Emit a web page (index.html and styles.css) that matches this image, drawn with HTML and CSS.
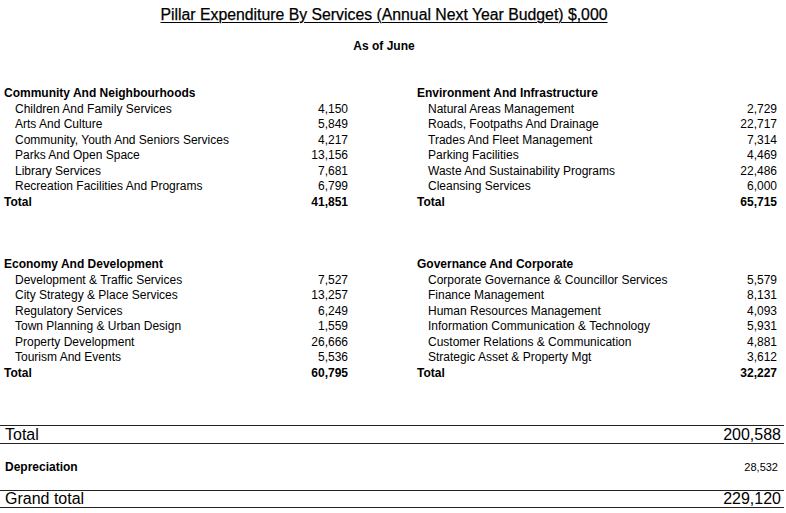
FILE: index.html
```html
<!DOCTYPE html>
<html>
<head>
<meta charset="utf-8">
<link rel="stylesheet" href="styles.css">
</head>
<body>
<div class="report">
  <h1 class="title">Pillar Expenditure By Services (Annual Next Year Budget) $,000</h1>
  <div class="subtitle">As of June</div>

  <div class="grid">
    <section class="group">
      <div class="row head">Community And Neighbourhoods</div>
      <div class="row item"><span>Children And Family Services</span><span>4,150</span></div>
      <div class="row item"><span>Arts And Culture</span><span>5,849</span></div>
      <div class="row item"><span>Community, Youth And Seniors Services</span><span>4,217</span></div>
      <div class="row item"><span>Parks And Open Space</span><span>13,156</span></div>
      <div class="row item"><span>Library Services</span><span>7,681</span></div>
      <div class="row item"><span>Recreation Facilities And Programs</span><span>6,799</span></div>
      <div class="row total"><span>Total</span><span>41,851</span></div>
    </section>
    <section class="group">
      <div class="row head">Environment And Infrastructure</div>
      <div class="row item"><span>Natural Areas Management</span><span>2,729</span></div>
      <div class="row item"><span>Roads, Footpaths And Drainage</span><span>22,717</span></div>
      <div class="row item"><span>Trades And Fleet Management</span><span>7,314</span></div>
      <div class="row item"><span>Parking Facilities</span><span>4,469</span></div>
      <div class="row item"><span>Waste And Sustainability Programs</span><span>22,486</span></div>
      <div class="row item"><span>Cleansing Services</span><span>6,000</span></div>
      <div class="row total"><span>Total</span><span>65,715</span></div>
    </section>
    <section class="group">
      <div class="row head">Economy And Development</div>
      <div class="row item"><span>Development &amp; Traffic Services</span><span>7,527</span></div>
      <div class="row item"><span>City Strategy &amp; Place Services</span><span>13,257</span></div>
      <div class="row item"><span>Regulatory Services</span><span>6,249</span></div>
      <div class="row item"><span>Town Planning &amp; Urban Design</span><span>1,559</span></div>
      <div class="row item"><span>Property Development</span><span>26,666</span></div>
      <div class="row item"><span>Tourism And Events</span><span>5,536</span></div>
      <div class="row total"><span>Total</span><span>60,795</span></div>
    </section>
    <section class="group">
      <div class="row head">Governance And Corporate</div>
      <div class="row item"><span>Corporate Governance &amp; Councillor Services</span><span>5,579</span></div>
      <div class="row item"><span>Finance Management</span><span>8,131</span></div>
      <div class="row item"><span>Human Resources Management</span><span>4,093</span></div>
      <div class="row item"><span>Information Communication &amp; Technology</span><span>5,931</span></div>
      <div class="row item"><span>Customer Relations &amp; Communication</span><span>4,881</span></div>
      <div class="row item"><span>Strategic Asset &amp; Property Mgt</span><span>3,612</span></div>
      <div class="row total"><span>Total</span><span>32,227</span></div>
    </section>
  </div>

  <div class="summary">
    <div class="sum big"><span>Total</span><span>200,588</span></div>
    <div class="sum dep"><span class="dep-label">Depreciation</span><span class="dep-val">28,532</span></div>
    <div class="sum big grand"><span>Grand total</span><span>229,120</span></div>
  </div>
</div>
</body>
</html>
```

FILE: styles.css
```css
html, body {
  margin: 0;
  padding: 0;
  background: #fff;
}
body {
  font-family: "Liberation Sans", Arial, sans-serif;
  color: #000;
  width: 786px;
  height: 513px;
  overflow: hidden;
}
.report {
  padding-top: 5px;
}
.title {
  margin: 0;
  font-size: 15.8px;
  font-weight: normal;
  line-height: 20px;
  height: 20px;
  text-align: center;
  text-decoration: underline;
  text-decoration-thickness: 1px;
  text-underline-offset: 2px;
  padding-right: 18px;
  -webkit-text-stroke: 0.25px #000;
}
.subtitle {
  margin-top: 13px;
  font-size: 12px;
  font-weight: bold;
  line-height: 16px;
  text-align: center;
  padding-right: 18px;
}
.grid {
  margin-top: 32.25px;
  padding-left: 4px;
  display: grid;
  grid-template-columns: 344px 360px;
  column-gap: 69px;
  row-gap: 47px;
}
.row {
  display: flex;
  justify-content: space-between;
  height: 15.5px;
  line-height: 15.5px;
  font-size: 12px;
  white-space: nowrap;
}
.head, .total {
  font-weight: bold;
}
.item {
  padding-left: 11px;
}
.summary {
  margin-top: 43.75px;
  width: 784px;
  border-top: 1px solid #222;
}
.sum {
  display: flex;
  justify-content: space-between;
  align-items: center;
  padding: 0 3px 0 5px;
}
.big {
  height: 17px;
  font-size: 16px;
  border-bottom: 1px solid #222;
}
.grand {
  border-top: 1px solid #222;
  height: 16px;
}
.dep {
  height: 46px;
  font-size: 11px;
}
.dep-label {
  font-weight: bold;
  font-size: 12px;
}
.dep-val {
  padding-right: 3px;
}
```
